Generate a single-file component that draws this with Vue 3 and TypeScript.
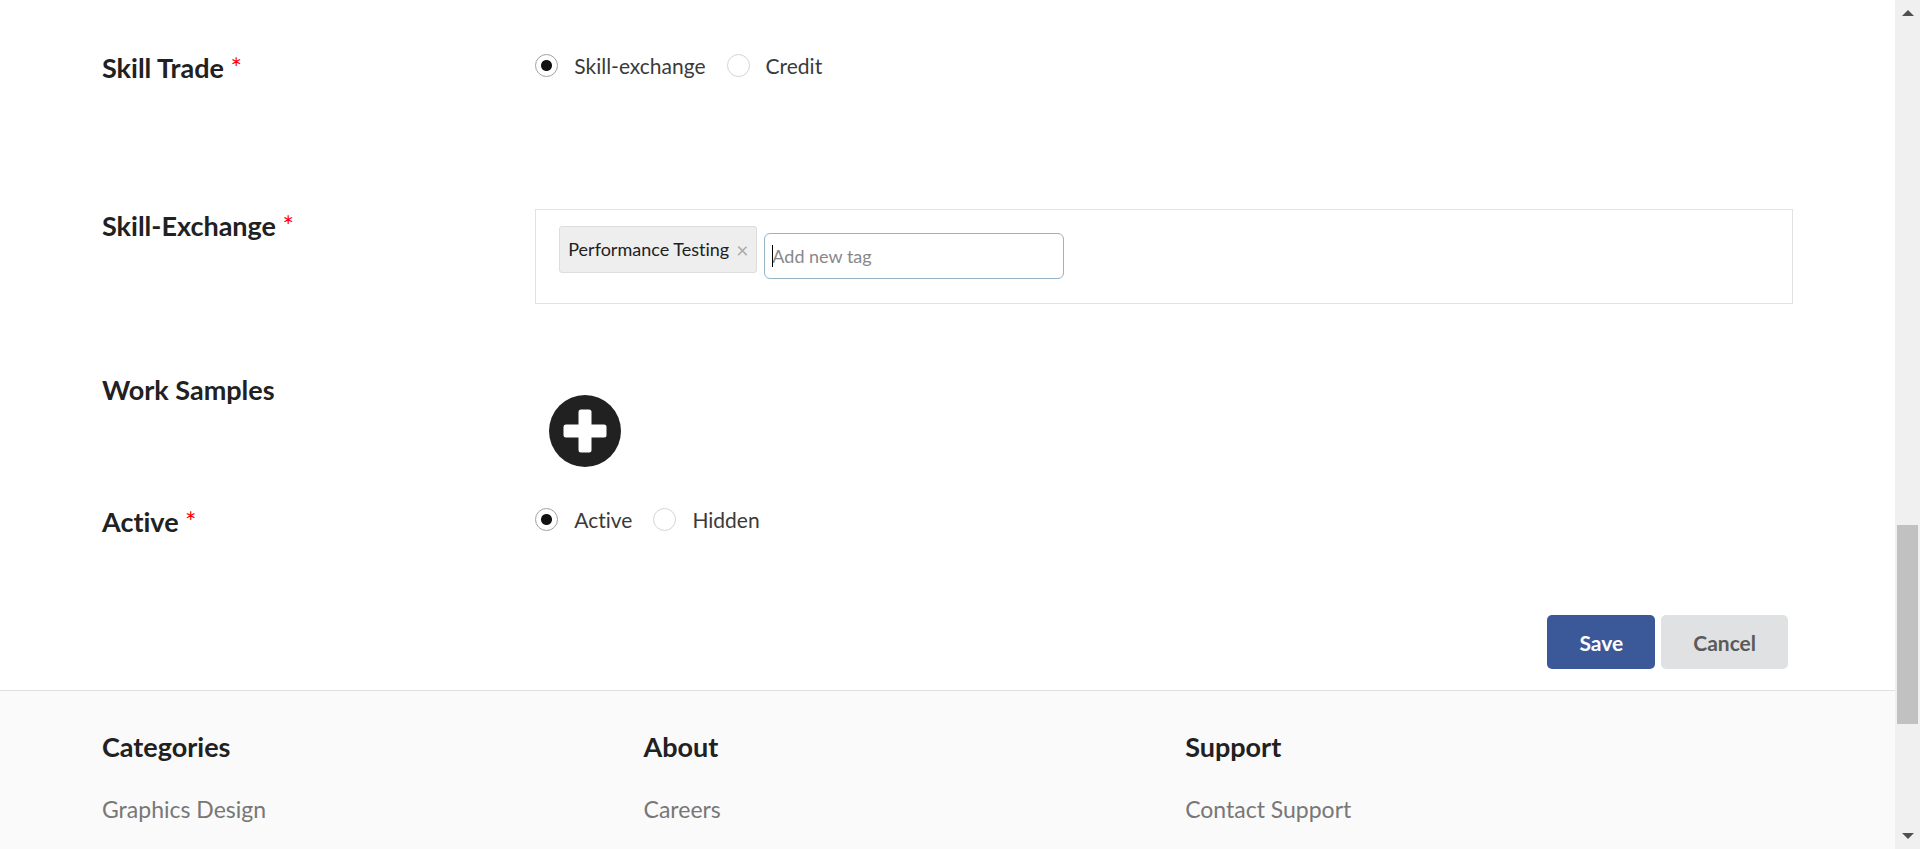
<script setup lang="ts">
import { onMounted, ref } from 'vue'

interface FooterColumn {
  title: string
  links: string[]
}

const skillTrade = ref<'exchange' | 'credit'>('exchange')
const visibility = ref<'active' | 'hidden'>('active')
const tags = ref<string[]>(['Performance Testing'])
const newTag = ref('')
const tagInput = ref<HTMLInputElement | null>(null)

const footerColumns: FooterColumn[] = [
  { title: 'Categories', links: ['Graphics Design'] },
  { title: 'About', links: ['Careers'] },
  { title: 'Support', links: ['Contact Support'] },
]

function addTag(): void {
  const value = newTag.value.trim()
  if (value && !tags.value.includes(value)) tags.value.push(value)
  newTag.value = ''
}

function removeTag(index: number): void {
  tags.value.splice(index, 1)
}

onMounted(() => tagInput.value?.focus({ preventScroll: true }))
</script>

<template>
  <div class="window">
    <div class="page">
      <form class="form" @submit.prevent>
        <div class="row trade">
          <h3 id="trade-label" class="label">Skill Trade <span class="required">*</span></h3>
          <div class="field radios" role="radiogroup" aria-labelledby="trade-label">
            <label class="radio"><input v-model="skillTrade" type="radio" name="trade" value="exchange" />Skill-exchange</label>
            <label class="radio"><input v-model="skillTrade" type="radio" name="trade" value="credit" />Credit</label>
          </div>
        </div>

        <div class="row exchange">
          <h3 class="label"><label for="new-tag">Skill-Exchange <span class="required">*</span></label></h3>
          <div class="field tag-box">
            <span v-for="(tag, index) in tags" :key="tag" class="tag">
              {{ tag }}
              <button type="button" class="remove" @click="removeTag(index)">×</button>
            </span>
            <span class="tag-entry">
              <input id="new-tag" ref="tagInput" v-model="newTag" type="text" placeholder="Add new tag" @keydown.enter.prevent="addTag" />
              <span v-if="!newTag" class="caret"></span>
            </span>
          </div>
        </div>

        <div class="row samples">
          <h3 id="samples-label" class="label">Work Samples</h3>
          <div class="field upload">
            <button type="button" class="add" aria-labelledby="samples-label">
              <svg viewBox="0 0 72 72" width="72" height="72" aria-hidden="true">
                <circle cx="36" cy="36" r="36" fill="#212121" />
                <rect x="14.5" y="29.5" width="43" height="13" rx="2.5" fill="#fff" />
                <rect x="29.5" y="14.5" width="13" height="43" rx="2.5" fill="#fff" />
              </svg>
            </button>
          </div>
        </div>

        <div class="row active">
          <h3 id="active-label" class="label">Active <span class="required">*</span></h3>
          <div class="field radios" role="radiogroup" aria-labelledby="active-label">
            <label class="radio"><input v-model="visibility" type="radio" name="visibility" value="active" />Active</label>
            <label class="radio"><input v-model="visibility" type="radio" name="visibility" value="hidden" />Hidden</label>
          </div>
        </div>

        <div class="actions">
          <button type="submit" class="button primary">Save</button>
          <button type="button" class="button">Cancel</button>
        </div>
      </form>

      <footer class="footer">
        <div class="columns">
          <section v-for="column in footerColumns" :key="column.title" class="column">
            <h3 class="label">{{ column.title }}</h3>
            <a v-for="link in column.links" :key="link" href="#">{{ link }}</a>
          </section>
        </div>
      </footer>
    </div>

    <div class="scrollbar" aria-hidden="true">
      <svg viewBox="0 0 12 6" width="12" height="6"><path d="M0 6 6 0l6 6z" fill="#505050" /></svg>
      <div class="track"><div class="thumb"></div></div>
      <svg viewBox="0 0 12 6" width="12" height="6"><path d="M0 0h12L6 6z" fill="#505050" /></svg>
    </div>
  </div>
</template>

<style>
body {
  margin: 0;
  background: #fff;
}
</style>

<style scoped>
* {
  box-sizing: border-box;
}

.window {
  display: flex;
  height: 100vh;
  overflow: hidden;
  font-family: Lato, "Liberation Sans", sans-serif;
  font-size: 21px;
  font-variant-ligatures: none;
  line-height: 31px;
  color: #212121;
}

.page {
  display: flex;
  flex: 1;
  flex-direction: column;
  min-width: 0;
  overflow: hidden;
}

.form {
  padding: 50px 102px 21px;
}

.row {
  display: grid;
  grid-template-columns: 1fr 3fr;
  margin-right: -42px;
}

.trade {
  margin-bottom: 123px;
}

.exchange {
  margin-bottom: 68px;
}

.samples {
  margin-bottom: 37px;
}

.active {
  margin-bottom: 76px;
}

.label {
  margin: 0;
  font-size: 27px;
  font-weight: 700;
  line-height: 35px;
  color: #212121;
}

.required {
  font-weight: 400;
  color: #f00;
}

.field {
  min-width: 0;
  margin-right: 42px;
}

.radios {
  display: flex;
  align-items: flex-start;
  gap: 21px;
}

.radio {
  display: flex;
  align-items: center;
  gap: 16px;
  color: #3a3a3a;
}

.radio input {
  width: 23px;
  height: 23px;
  margin: 0;
  appearance: none;
  background: #fff;
  border: 1px solid #d4d4d5;
  border-radius: 50%;
}

.radio input:checked {
  background: radial-gradient(circle, #111 5px, #fff 6px);
  border-color: #a0a0a0;
}

.tag-box {
  display: flex;
  align-items: flex-start;
  gap: 7px;
  margin-top: 1px;
  padding: 16px 23px 24px;
  border: 1px solid #e2e2e3;
}

.tag {
  display: flex;
  align-items: center;
  gap: 7px;
  height: 47px;
  padding: 0 8px 1px;
  font-size: 18px;
  background: #eee;
  border: 1px solid #ddd;
  border-radius: 3px;
}

.remove {
  padding: 0;
  font: inherit;
  font-size: 21px;
  color: #aaa;
  background: none;
  border: 0;
}

.tag-entry {
  position: relative;
  width: 300px;
  margin-top: 7px;
}

.tag-entry input {
  display: block;
  width: 100%;
  height: 46px;
  padding: 0 7px;
  font: inherit;
  font-size: 18px;
  color: #212121;
  caret-color: transparent;
  background: #fff;
  border: 1px solid #96b4c5;
  border-radius: 6px;
  outline: 0;
}

.tag-entry input::placeholder {
  color: #888;
  opacity: 1;
}

.caret {
  position: absolute;
  top: 12px;
  left: 8px;
  width: 1px;
  height: 22px;
  background: #000;
}

.upload {
  padding: 23px 14px 0;
}

.add {
  display: block;
  padding: 0;
  background: none;
  border: 0;
}

.add svg {
  display: block;
}

.actions {
  display: flex;
  justify-content: flex-end;
  gap: 6px;
  padding-right: 5px;
}

.button {
  height: 54px;
  padding: 0 32px;
  font: inherit;
  font-weight: 700;
  color: #5a5a5b;
  background: #e0e1e2;
  border: 0;
  border-radius: 5px;
}

.primary {
  color: #fff;
  background: #3b5998;
}

.footer {
  flex: 1;
  padding: 38px 102px;
  background: #fafafa;
  border-top: 1px solid #dfdfdf;
}

.columns {
  display: grid;
  grid-template-columns: 5fr 5fr 6fr;
  margin-right: -42px;
}

.column {
  display: flex;
  flex-direction: column;
  align-items: flex-start;
  gap: 30px;
}

.column a {
  font-size: 23px;
  color: #777;
  text-decoration: none;
}

.scrollbar {
  display: flex;
  flex-direction: column;
  align-items: center;
  width: 25px;
  padding: 10px 2px;
  background: #f0f0f0;
}

.track {
  display: flex;
  flex: 1;
  flex-direction: column;
  width: 100%;
  padding: 8px 0;
}

.track::before {
  flex: 501;
  content: "";
}

.track::after {
  flex: 101;
  content: "";
}

.thumb {
  flex: 199;
  background: #c1c1c1;
}
</style>
